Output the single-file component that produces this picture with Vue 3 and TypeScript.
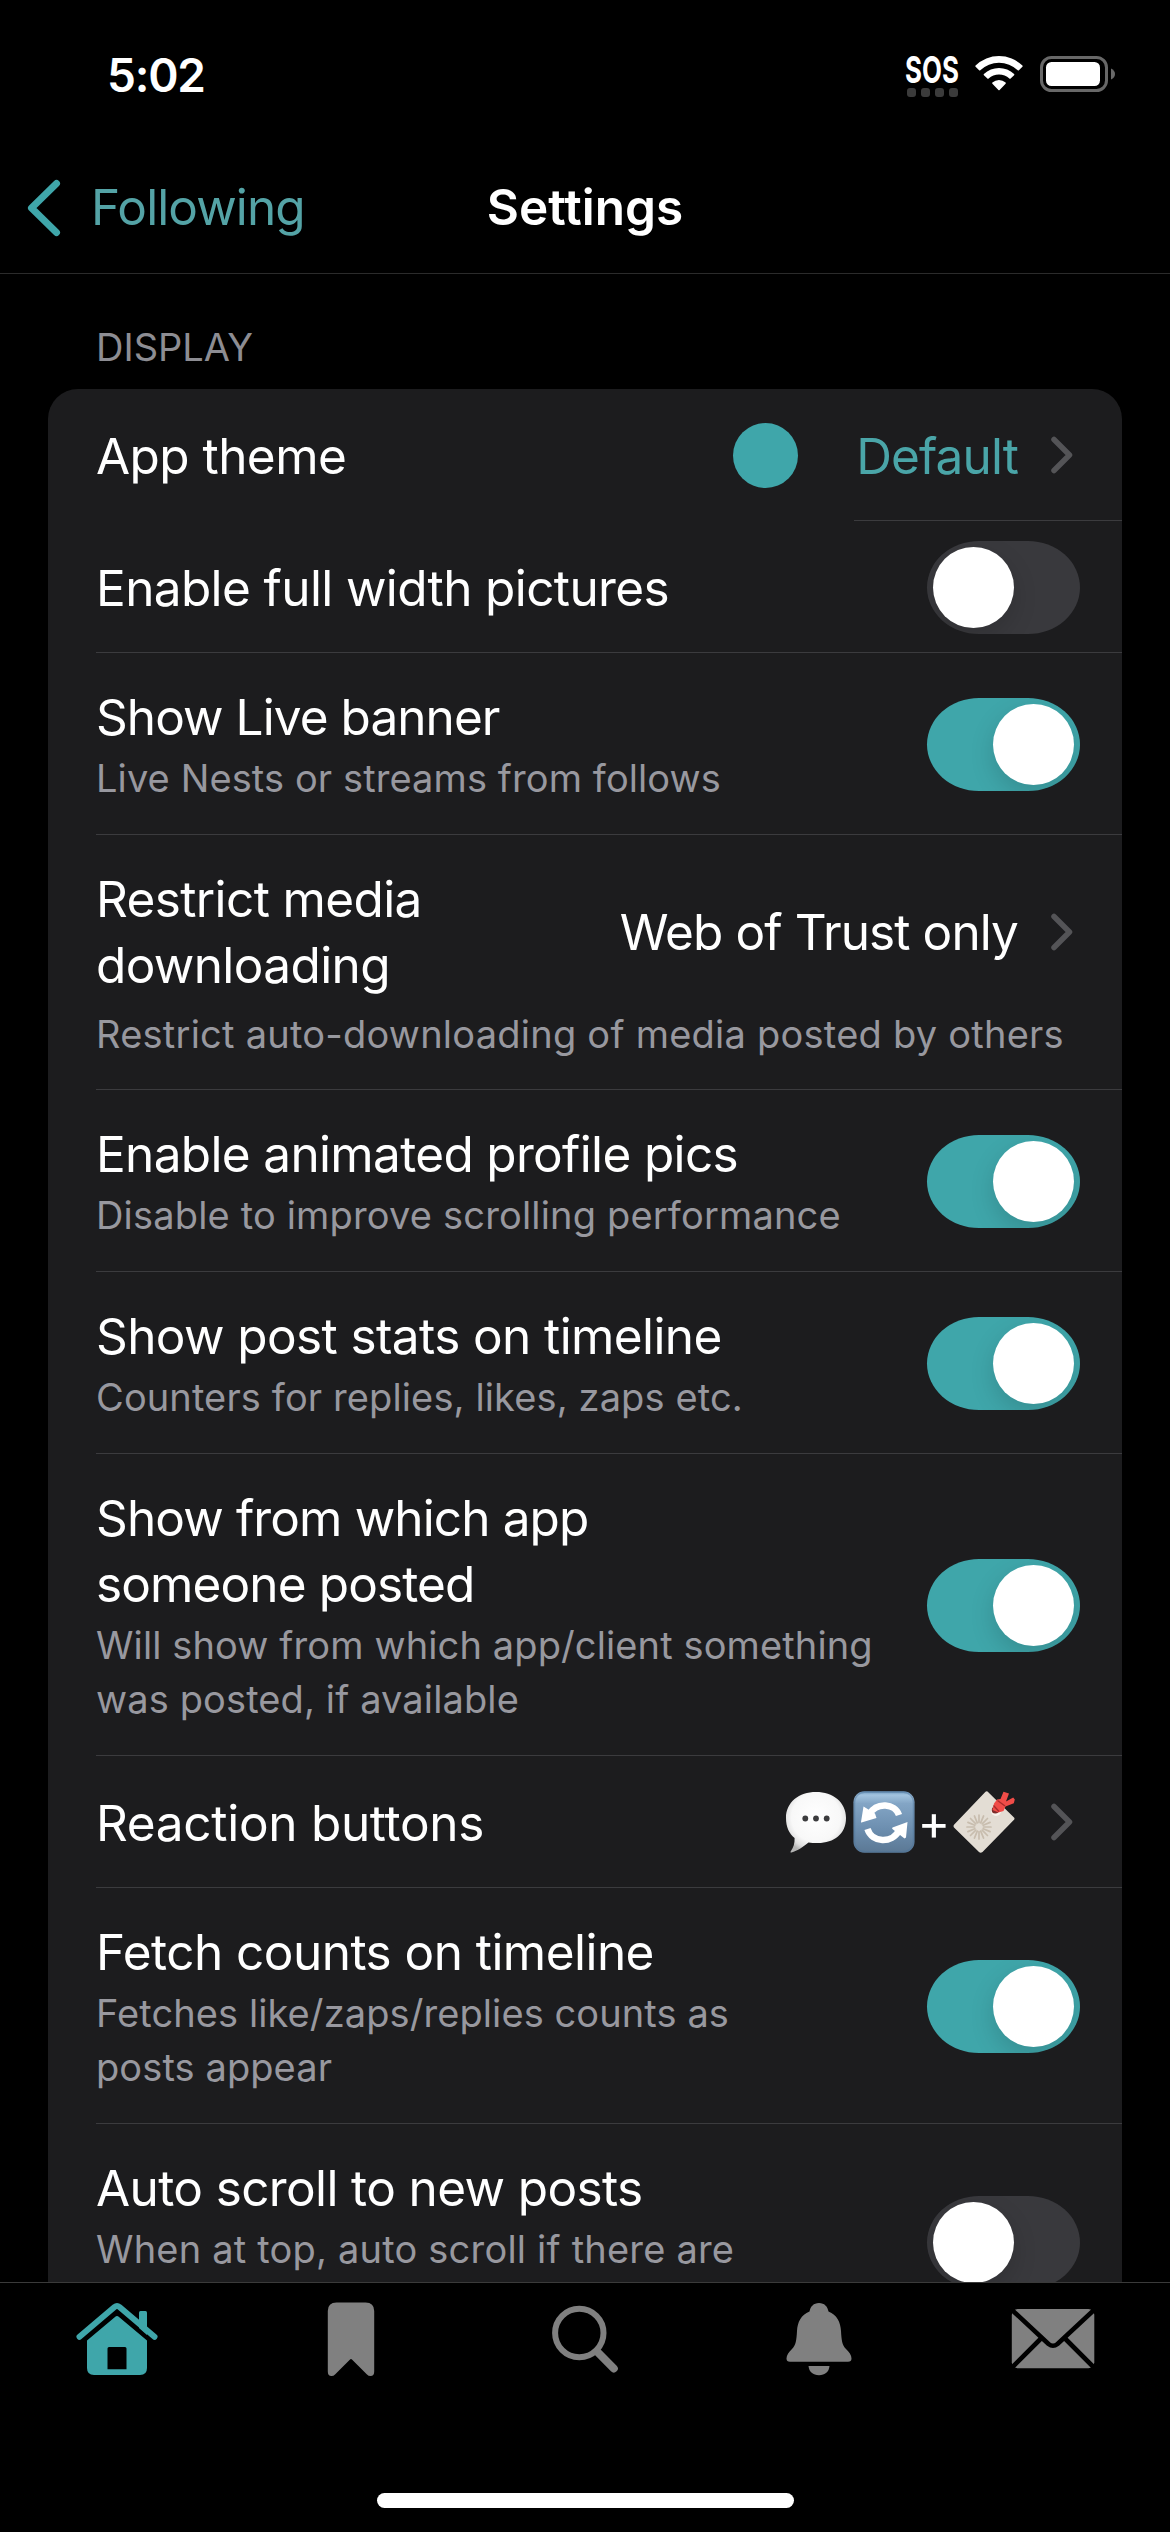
<script setup lang="ts">
interface Row {
  title: string
  note?: string
  kind: 'theme' | 'toggle' | 'value' | 'reactions'
  on?: boolean
  value?: string
  single?: boolean
  spaced?: boolean
  cut?: boolean
  tracking?: number
  noteTracking?: number
}

const rows: Row[] = [
  { title: 'App theme', kind: 'theme', value: 'Default', single: true, tracking: -0.55 },
  { title: 'Enable full width pictures', kind: 'toggle', on: false, single: true, tracking: -0.62 },
  { title: 'Show Live banner', note: 'Live Nests or streams from follows', kind: 'toggle', on: true, tracking: -0.93, noteTracking: 0.1 },
  {
    title: 'Restrict media\ndownloading',
    note: 'Restrict auto-downloading of media posted by others',
    kind: 'value',
    value: 'Web of Trust only',
    spaced: true,
    tracking: -0.62,
    noteTracking: 0.24,
  },
  { title: 'Enable animated profile pics', note: 'Disable to improve scrolling performance', kind: 'toggle', on: true, tracking: -0.66, noteTracking: 0.17 },
  { title: 'Show post stats on timeline', note: 'Counters for replies, likes, zaps etc.', kind: 'toggle', on: true, tracking: -0.6, noteTracking: 0.12 },
  {
    title: 'Show from which app\nsomeone posted',
    note: 'Will show from which app/client something\nwas posted, if available',
    kind: 'toggle',
    on: true,
    tracking: -0.87,
    noteTracking: 0.12,
  },
  { title: 'Reaction buttons', kind: 'reactions', single: true, tracking: -0.3 },
  { title: 'Fetch counts on timeline', note: 'Fetches like/zaps/replies counts as\nposts appear', kind: 'toggle', on: true, tracking: -0.54, noteTracking: 0.09 },
  { title: 'Auto scroll to new posts', note: 'When at top, auto scroll if there are', kind: 'toggle', on: false, cut: true, tracking: -0.62, noteTracking: 0.2 },
]

const spacing = (value = 0) => ({ letterSpacing: `${value}px` })

const petals = Array.from({ length: 16 }, (_, i) => i * 22.5)
</script>

<template>
  <div class="screen">
    <header class="status">
      <span class="time">5:02</span>
      <div class="indicators">
        <div class="sos">
          <span class="sos-text">SOS</span>
          <div class="dots"><i v-for="n in 4" :key="n" /></div>
        </div>
        <svg class="wifi" width="48" height="36" viewBox="0 0 48 36">
          <g fill="#fff">
            <path d="M0.6 10.6 A33.5 33.5 0 0 1 47.4 10.6 Q48 11.2 47.4 11.8 L43.9 15.2 Q43.3 15.8 42.7 15.2 A27 27 0 0 0 5.3 15.2 Q4.7 15.8 4.1 15.2 L0.6 11.8 Q0 11.2 0.6 10.6 Z" />
            <path d="M8.9 19 A21.7 21.7 0 0 1 39.1 19 Q39.7 19.6 39.1 20.2 L35.6 23.6 Q35 24.2 34.4 23.6 A15 15 0 0 0 13.6 23.6 Q13 24.2 12.4 23.6 L8.9 20.2 Q8.3 19.6 8.9 19 Z" />
            <path d="M17.4 27.6 A9.8 9.8 0 0 1 30.6 27.6 Q31.2 28.2 30.6 28.8 L24.6 35 Q24 35.6 23.4 35 L17.4 28.8 Q16.8 28.2 17.4 27.6 Z" />
          </g>
        </svg>
        <svg class="battery" width="76" height="36" viewBox="0 0 76 36">
          <rect x="1.5" y="1.5" width="65" height="33" rx="10" fill="none" stroke="#686868" stroke-width="3" />
          <rect x="6" y="6" width="54" height="24" rx="5.5" fill="#fff" />
          <path d="M71 12.5 Q75 14.5 75 18 Q75 21.500 71 23.500 Z" fill="#686868" />
        </svg>
      </div>
    </header>

    <nav class="navbar">
      <div class="back">
        <svg width="34" height="58" viewBox="0 0 34 58">
          <path d="M29.500 4.500 L4.500 29 L29.500 53.500" fill="none" stroke="#3fa6aa" stroke-width="7" stroke-linecap="round" stroke-linejoin="round" />
        </svg>
        <span class="back-text">Following</span>
      </div>
      <h1>Settings</h1>
      <div class="nav-end" />
    </nav>

    <main class="content">
      <h2>DISPLAY</h2>
      <section class="card">
        <div
          v-for="(row, i) in rows"
          :key="i"
          class="row"
          :class="{ single: row.single, spaced: row.spaced, cut: row.cut, 'theme-row': row.kind === 'theme' }"
        >
          <div class="line">
            <div class="copy">
              <div class="title" :style="spacing(row.tracking)">{{ row.title }}</div>
              <div v-if="row.note && !row.spaced" class="note" :style="spacing(row.noteTracking)">{{ row.note }}</div>
            </div>
            <div v-if="row.kind === 'toggle'" class="toggle" :class="{ on: row.on }"><span class="knob" /></div>
            <div v-else class="accessory">
              <span v-if="row.kind === 'theme'" class="swatch" />
              <span v-if="row.value" class="value" :class="{ tint: row.kind === 'theme' }">{{ row.value }}</span>
              <div v-if="row.kind === 'reactions'" class="emojis">
                <svg width="62" height="62" viewBox="0 0 62 62">
                  <defs>
                    <radialGradient id="bubble" cx="0.5" cy="0.42" r="0.6">
                      <stop offset="0" stop-color="#fff" />
                      <stop offset="0.68" stop-color="#f8f8f8" />
                      <stop offset="0.88" stop-color="#dedede" />
                      <stop offset="1" stop-color="#b4b4b4" />
                    </radialGradient>
                  </defs>
                  <path d="M31 1 C48 1 61 11 61 27 C61 43 49 52 33 52 C29 52 26 52 23.500 51.500 C18.500 55.500 12.500 60 6.500 61.500 C5.500 61.700 5.200 61 5.800 60.200 C8.500 56.500 9.800 52.500 9.600 47 C4 42.500 1 36 1 27 C1 11 14 1 31 1 Z" fill="url(#bubble)" />
                  <g fill="#3c3c3e">
                    <circle cx="20.300" cy="27.500" r="2.900" />
                    <circle cx="31" cy="27.500" r="2.900" />
                    <circle cx="41.700" cy="27.500" r="2.900" />
                  </g>
                </svg>
                <svg class="cycle" width="62" height="62" viewBox="0 0 62 62">
                  <defs>
                    <linearGradient id="tile" x1="0" y1="0" x2="0" y2="1">
                      <stop offset="0" stop-color="#6c97bd" />
                      <stop offset="0.06" stop-color="#a3c4df" />
                      <stop offset="0.2" stop-color="#83a5c5" />
                      <stop offset="0.6" stop-color="#6d8fb0" />
                      <stop offset="1" stop-color="#5b7894" />
                    </linearGradient>
                  </defs>
                  <rect x="0.500" y="0.300" width="61" height="61.500" rx="11" fill="url(#tile)" />
                  <rect x="1.500" y="1.300" width="59" height="59.500" rx="10" fill="none" stroke="#4d7499" stroke-opacity="0.45" stroke-width="1.500" />
                  <g fill="none" stroke="#fff" stroke-width="6.500">
                    <path d="M46 24 C42 12.500 24 10.500 16.500 23" />
                    <path d="M14.500 38 C19 52 39 53 46 39.500" />
                  </g>
                  <path d="M10.500 15.500 L8 31 Q8.200 32 9.300 31.300 L23.500 27 L22 22.500 Z" fill="#fff" />
                  <path d="M54.500 31 L39.500 36.500 Q38.500 37.500 39.700 38.200 L51.500 47.500 L53 46.500 Z" fill="#fff" />
                </svg>
                <span class="plus">+</span>
                <svg width="62" height="62" viewBox="0 0 62 62">
                  <path d="M34.500 0.500 L61 26.500 Q62 27.600 61 28.800 L29.500 61 Q27.500 62.500 26 61 L1 36.500 Q0 35 1 33.700 L32.500 0.800 Q33.500 -0.300 34.500 0.500 Z" fill="#e3ddd4" />
                  <g stroke="#c8bdae" stroke-width="1.700" stroke-linecap="round">
                    <line v-for="a in petals" :key="a" x1="26" y1="31.500" x2="26" y2="24" :transform="`rotate(${a} 26 36)`" />
                  </g>
                  <circle cx="43" cy="20" r="5" fill="#f7f3ec" />
                  <circle cx="42.300" cy="19" r="3.600" fill="#7d2d2b" />
                  <path d="M41 12.500 L44 8.500 L47.500 8 L50.500 0.800 L56 2.400 L53 10.500 L60.200 6.500 L61.800 8.500 L60.800 12.300 L52.500 15.500 L50.500 20 L45.500 21.500 L39.500 19 Z" fill="#f04c48" />
                  <path d="M44.500 9.500 L52 15 M40.500 14.500 L46 20.500" fill="none" stroke="#a92b2c" stroke-width="1.400" />
                </svg>
              </div>
              <svg class="chevron" width="22" height="38" viewBox="0 0 22 38">
                <path d="M3 3.500 L18.500 19 L3 34.500" fill="none" stroke="#545457" stroke-width="5.500" stroke-linecap="round" stroke-linejoin="round" />
              </svg>
            </div>
          </div>
          <div v-if="row.spaced" class="note" :style="spacing(row.noteTracking)">{{ row.note }}</div>
        </div>
      </section>
    </main>

    <footer class="tabbar">
      <div class="tabs">
        <div class="tab">
          <svg width="82" height="74" viewBox="0 0 82 74">
            <g fill="#3fa6aa">
              <path d="M63 26 V10.500 Q63 9 64.500 9 H69.500 Q71 9 71 10.500 V33 Z" />
              <path d="M41 14 Q42 14 43 15 L71 38.500 V66 Q71 73 64 73 H18 Q11 73 11 66 V38.500 L39 15 Q40 14 41 14 Z M33 45 Q31.500 45 31.500 46.500 V67.300 H50.500 V46.500 Q50.500 45 49 45 Z" fill-rule="evenodd" />
            </g>
            <path d="M3.500 34.700 L38.500 5 Q41 3 43.500 5 L78.500 34.700" fill="none" stroke="#3fa6aa" stroke-width="6" stroke-linecap="round" />
          </svg>
        </div>
        <div class="tab">
          <svg width="48" height="74" viewBox="0 0 48 74">
            <path d="M9.500 0.500 H38.500 Q47.200 0.500 47.200 9 V69.500 Q47.200 74 43.500 74 Q41.500 74 40 72.500 L25.200 57.800 Q24 56.300 22.800 57.800 L8 72.500 Q6.500 74 4.500 74 Q0.800 74 0.800 69.500 V9 Q0.800 0.500 9.500 0.500 Z" fill="#808080" />
          </svg>
        </div>
        <div class="tab">
          <svg width="68" height="74" viewBox="0 0 68 74">
            <circle cx="28.300" cy="31" r="24.200" fill="none" stroke="#808080" stroke-width="6" />
            <path d="M46.500 50 L62.800 66.500" stroke="#808080" stroke-width="8" stroke-linecap="round" />
          </svg>
        </div>
        <div class="tab">
          <svg width="66" height="74" viewBox="0 0 66 74">
            <path d="M33 1 C38.500 1 41.500 4.500 42.500 9.500 C51 13 54.500 20 55 29 C55.500 38 56 43 60 47 C63 50 65.500 53 65.500 56.500 Q65.500 59.700 62 59.700 H4 Q0.500 59.700 0.500 56.500 C0.500 53 3 50 6 47 C10 43 10.500 38 11 29 C11.500 20 15 13 23.500 9.500 C24.500 4.500 27.500 1 33 1 Z" fill="#808080" />
            <path d="M22.500 64 H43.500 C43 70 39 73.200 33 73.200 C27 73.200 23 70 22.500 64 Z" fill="#808080" />
          </svg>
        </div>
        <div class="tab">
          <svg width="84" height="74" viewBox="0 0 84 74">
            <rect x="0.800" y="7" width="82.500" height="59.300" rx="6" fill="#808080" />
            <g fill="none" stroke="#000" stroke-width="4.600">
              <path d="M1 8 L37.500 42 Q42 45.500 46.500 42 L83 8" />
              <path d="M1 65.500 L31 35.500 M83 65.500 L53 35.500" />
            </g>
          </svg>
        </div>
      </div>
      <div class="home-bar" />
    </footer>
  </div>
</template>

<style>
html,
body {
  background: #000;
}
</style>

<style scoped>
.screen {
  width: 1170px;
  height: 2532px;
  display: flex;
  flex-direction: column;
  overflow: hidden;
  background: #000;
  color: #fff;
  font-family: Inter, "Liberation Sans", sans-serif;
}

.screen * {
  box-sizing: border-box;
}

.screen svg {
  display: block;
  flex: none;
}

.status {
  flex: none;
  height: 142px;
  padding: 0 54px 0 107px;
  display: flex;
  justify-content: space-between;
}

.time {
  padding-top: 48px;
  font-size: 46px;
  line-height: 54px;
  font-weight: 600;
  letter-spacing: -1.2px;
}

.indicators {
  display: flex;
  padding-top: 55px;
}

.sos {
  width: 54px;
  margin-right: 16px;
}

.sos-text {
  display: block;
  width: 78px;
  height: 29px;
  font-size: 37px;
  line-height: 29px;
  font-weight: 700;
  transform: scaleX(0.7);
  transform-origin: 0 0;
}

.dots {
  display: flex;
  justify-content: space-between;
  padding: 4px 1px 0 2px;
}

.dots i {
  width: 9px;
  height: 9px;
  border-radius: 3px;
  background: #3b3b3b;
}

.battery {
  margin: 1px 0 0 17px;
}

.navbar {
  flex: none;
  height: 132px;
  border-bottom: 1px solid #2b2b2b;
  display: flex;
  align-items: center;
}

.back {
  width: 400px;
  display: flex;
  align-items: center;
  padding-left: 27px;
}

.back-text {
  padding-left: 30px;
  padding-bottom: 2px;
  font-size: 49.5px;
  line-height: 66px;
  letter-spacing: -0.9px;
  color: #54a3a6;
}

h1 {
  margin: 0;
  padding-bottom: 2px;
  flex: 1;
  text-align: center;
  font-size: 49.5px;
  line-height: 66px;
  font-weight: 600;
  letter-spacing: 0;
}

.nav-end {
  width: 400px;
}

.content {
  flex: none;
  height: 2008px;
  overflow: hidden;
  padding: 0 48px;
}

h2 {
  margin: 0;
  height: 115px;
  padding: 46px 0 0 48px;
  font-size: 38px;
  line-height: 54px;
  font-weight: 400;
  letter-spacing: 0;
  color: #8d8d93;
}

.card {
  background: #1c1c1e;
  border-radius: 30px 30px 0 0;
  overflow: hidden;
}

.row {
  padding: 31px 42px 31px 48px;
  background: linear-gradient(#3b3b3e, #3b3b3e) 48px 100% / 100% 1px no-repeat;
}

.row.single {
  height: 132px;
  padding-top: 33px;
  padding-bottom: 33px;
}

.row.single .title,
.row.single .value {
  padding-top: 1px;
}

.row.theme-row {
  background-position-x: 806px;
}

.row.spaced {
  padding-bottom: 30px;
}

.row.cut {
  height: 236px;
}

.row.cut .line {
  height: 174px;
}

.line {
  display: flex;
  align-items: center;
  justify-content: space-between;
}

.row.single .line {
  height: 66px;
}

.copy {
  align-self: flex-start;
}

.title,
.value {
  font-size: 49.5px;
  line-height: 66px;
  white-space: pre;
}

.value {
  letter-spacing: -0.9px;
}

.note {
  padding-top: 1px;
  margin-bottom: -1px;
  font-size: 38px;
  line-height: 54px;
  white-space: pre;
  color: #98989f;
}

.row.spaced > .note {
  margin-top: 8px;
}

.toggle {
  flex: none;
  width: 153px;
  height: 93px;
  padding: 6px;
  border-radius: 52px / 46.5px;
  background: #39393d;
  display: flex;
  overflow: hidden;
}

.toggle.on {
  background: #3fa6aa;
  justify-content: flex-end;
}

.knob {
  width: 81px;
  height: 81px;
  border-radius: 50%;
  background: #fff;
  box-shadow: 0 9px 24px rgba(0, 0, 0, 0.15);
}

.accessory {
  display: flex;
  align-items: center;
}

.swatch {
  width: 65px;
  height: 65px;
  margin-right: 58px;
  border-radius: 50%;
  background: #3fa6aa;
}

.value.tint {
  color: #4aa5a8;
}

.chevron {
  margin: 0 7px 0 33px;
}

.emojis {
  display: flex;
  align-items: center;
}

.emojis + .chevron {
  margin-left: 36px;
}

.cycle {
  margin-left: 6px;
}

.plus {
  width: 38px;
  text-align: center;
  font-size: 49.5px;
  line-height: 66px;
}

.tabbar {
  flex: 1;
  border-top: 1px solid #3a3a3a;
  display: flex;
  flex-direction: column;
  align-items: center;
}

.tabs {
  width: 100%;
  padding-top: 19px;
  display: flex;
}

.tab {
  flex: 1;
  display: flex;
  justify-content: center;
}

.home-bar {
  width: 417px;
  height: 15px;
  margin-top: 117px;
  border-radius: 8px;
  background: #fff;
}
</style>
